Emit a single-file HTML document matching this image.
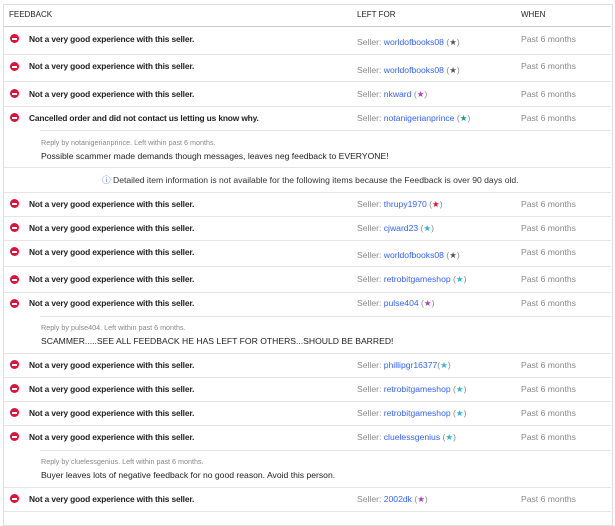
<!DOCTYPE html><html><head><style>
body{margin:0;width:615px;height:513px;background:#fff;font-family:"Liberation Sans",sans-serif;position:relative;overflow:hidden}
.b{position:absolute;left:3px;top:4px;width:608px;height:520px;border:1px solid #ddd}
.t{position:absolute;white-space:nowrap;font-size:8.6px;line-height:10px;transform:translateY(-5px)}
.f{left:29px;color:#222;font-weight:bold;letter-spacing:-0.15px;font-size:8.4px}
.s{left:357px;color:#888}
.s a{color:#3665f3}
.w{left:521px;color:#888}
.i{position:absolute;left:10px;width:9px;height:9px;border-radius:50%;background:#e0103a;transform:translateY(-5px)}
.i:after{content:"";position:absolute;left:2px;top:4px;width:5px;height:1.5px;background:#fff}
.l{position:absolute;left:4px;width:607px;height:1px;background:#e5e5e5}
.lp{left:40px;width:571px}
.h{font-weight:normal;color:#222;font-size:8px}
.r{left:41px;font-size:7.2px;color:#888}
</style></head><body>
<div class="b"></div>
<div class="t h" style="left:9px;top:15px">FEEDBACK</div>
<div class="t h" style="left:357px;top:15px">LEFT FOR</div>
<div class="t h" style="left:521px;top:15px">WHEN</div>
<div class="l" style="top:26px;background:#ccc"></div>

<div class="i" style="top:39px"></div><div class="t f" style="top:39px">Not a very good experience with this seller.</div><div class="t s" style="top:42px">Seller: <a>worldofbooks08</a> (<span style="color:#555">★</span>)</div><div class="t w" style="top:39px">Past 6 months</div>
<div class="l" style="top:54px"></div>
<div class="i" style="top:67px"></div><div class="t f" style="top:66px">Not a very good experience with this seller.</div><div class="t s" style="top:70px">Seller: <a>worldofbooks08</a> (<span style="color:#555">★</span>)</div><div class="t w" style="top:66px">Past 6 months</div>
<div class="l" style="top:81px"></div>
<div class="i" style="top:94px"></div><div class="t f" style="top:94px">Not a very good experience with this seller.</div><div class="t s" style="top:94px">Seller: <a>nkward</a> (<span style="color:#b03fc0">★</span>)</div><div class="t w" style="top:94px">Past 6 months</div>
<div class="l" style="top:106px"></div>
<div class="i" style="top:118px"></div><div class="t f" style="top:118px">Cancelled order and did not contact us letting us know why.</div><div class="t s" style="top:118px">Seller: <a>notanigerianprince</a> (<span style="color:#1a9a9a">★</span>)</div><div class="t w" style="top:118px">Past 6 months</div>
<div class="l lp" style="top:130px"></div>
<div class="t r" style="top:143px">Reply by notanigerianprince. Left within past 6 months.</div>
<div class="t" style="left:41px;top:156px;color:#222">Possible scammer made demands though messages, leaves neg feedback to EVERYONE!</div>
<div class="l" style="top:167px"></div>
<div class="t" style="left:102px;top:180px;color:#333"><span style="color:#3665f3">ⓘ</span> Detailed item information is not available for the following items because the Feedback is over 90 days old.</div>
<div class="l" style="top:192px"></div>

<div class="i" style="top:204px"></div><div class="t f" style="top:204px">Not a very good experience with this seller.</div><div class="t s" style="top:204px">Seller: <a>thrupy1970</a> (<span style="color:#e0103a">★</span>)</div><div class="t w" style="top:204px">Past 6 months</div>
<div class="l" style="top:216px"></div>
<div class="i" style="top:228px"></div><div class="t f" style="top:228px">Not a very good experience with this seller.</div><div class="t s" style="top:228px">Seller: <a>cjward23</a> (<span style="color:#2ab8d0">★</span>)</div><div class="t w" style="top:228px">Past 6 months</div>
<div class="l" style="top:240px"></div>
<div class="i" style="top:252px"></div><div class="t f" style="top:252px">Not a very good experience with this seller.</div><div class="t s" style="top:255px">Seller: <a>worldofbooks08</a> (<span style="color:#555">★</span>)</div><div class="t w" style="top:252px">Past 6 months</div>
<div class="l" style="top:266px"></div>
<div class="i" style="top:280px"></div><div class="t f" style="top:279px">Not a very good experience with this seller.</div><div class="t s" style="top:279px">Seller: <a>retrobitgameshop</a> (<span style="color:#2ab8d0">★</span>)</div><div class="t w" style="top:279px">Past 6 months</div>
<div class="l" style="top:292px"></div>
<div class="i" style="top:304px"></div><div class="t f" style="top:303px">Not a very good experience with this seller.</div><div class="t s" style="top:303px">Seller: <a>pulse404</a> (<span style="color:#b03fc0">★</span>)</div><div class="t w" style="top:303px">Past 6 months</div>
<div class="l lp" style="top:316px"></div>
<div class="t r" style="top:328px">Reply by pulse404. Left within past 6 months.</div>
<div class="t" style="left:41px;top:341px;color:#222">SCAMMER.....SEE ALL FEEDBACK HE HAS LEFT FOR OTHERS...SHOULD BE BARRED!</div>
<div class="l" style="top:353px"></div>
<div class="i" style="top:365px"></div><div class="t f" style="top:365px">Not a very good experience with this seller.</div><div class="t s" style="top:365px">Seller: <a>phillipgr16377</a>(<span style="color:#2ab8d0">★</span>)</div><div class="t w" style="top:365px">Past 6 months</div>
<div class="l" style="top:377px"></div>
<div class="i" style="top:389px"></div><div class="t f" style="top:389px">Not a very good experience with this seller.</div><div class="t s" style="top:389px">Seller: <a>retrobitgameshop</a> (<span style="color:#2ab8d0">★</span>)</div><div class="t w" style="top:389px">Past 6 months</div>
<div class="l" style="top:401px"></div>
<div class="i" style="top:413px"></div><div class="t f" style="top:413px">Not a very good experience with this seller.</div><div class="t s" style="top:413px">Seller: <a>retrobitgameshop</a> (<span style="color:#2ab8d0">★</span>)</div><div class="t w" style="top:413px">Past 6 months</div>
<div class="l" style="top:425px"></div>
<div class="i" style="top:437px"></div><div class="t f" style="top:437px">Not a very good experience with this seller.</div><div class="t s" style="top:437px">Seller: <a>cluelessgenius</a> (<span style="color:#2ab8d0">★</span>)</div><div class="t w" style="top:437px">Past 6 months</div>
<div class="l lp" style="top:450px"></div>
<div class="t r" style="top:462px">Reply by cluelessgenius. Left within past 6 months.</div>
<div class="t" style="left:41px;top:475px;color:#222">Buyer leaves lots of negative feedback for no good reason. Avoid this person.</div>
<div class="l" style="top:487px"></div>
<div class="i" style="top:499px"></div><div class="t f" style="top:499px">Not a very good experience with this seller.</div><div class="t s" style="top:499px">Seller: <a>2002dk</a> (<span style="color:#b03fc0">★</span>)</div><div class="t w" style="top:499px">Past 6 months</div>
<div class="l" style="top:511px"></div>
</body></html>
